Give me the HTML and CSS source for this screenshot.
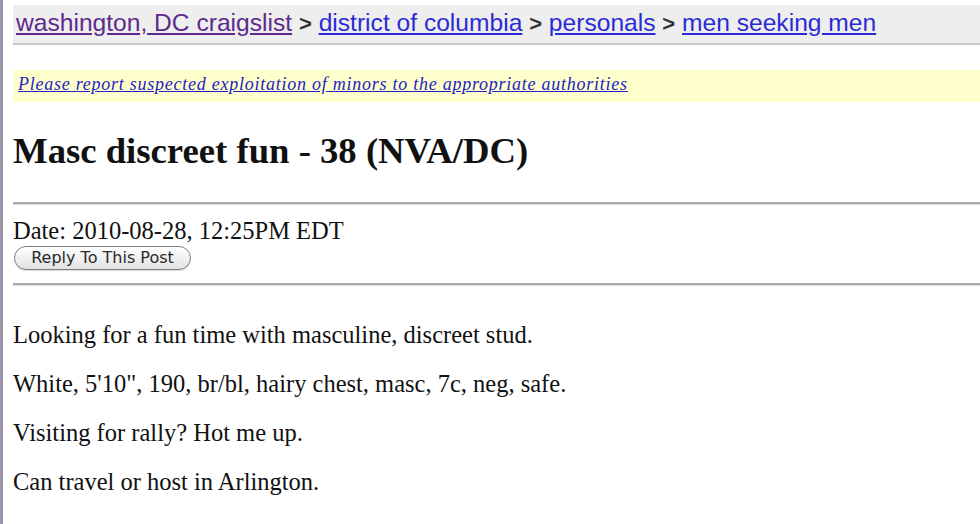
FILE: index.html
```html
<!DOCTYPE html>
<html lang="en">
<head>
    <meta charset="UTF-8">
    <title>Masc discreet fun - 38 (NVA/DC)</title>
    <link rel="stylesheet" href="styles.css">
</head>
<body>
    <div class="page">
        <div class="bchead">
            <a href="#" class="visited">washington, DC craigslist</a>
            <span class="sep">&gt;</span>
            <a href="#">district of columbia</a>
            <span class="sep">&gt;</span>
            <a href="#">personals</a>
            <span class="sep">&gt;</span>
            <a href="#">men seeking men</a>
        </div>

        <div class="notice">
            <a href="#">Please report suspected exploitation of minors to the appropriate authorities</a>
        </div>

        <h2 class="post-title">Masc discreet fun - 38 (NVA/DC)</h2>

        <hr>
        <div class="post-date">Date: 2010-08-28, 12:25PM EDT</div>
        <button class="reply-btn">Reply To This Post</button>
        <hr>

        <div class="userbody">
            <p>Looking for a fun time with masculine, discreet stud.</p>
            <p>White, 5'10", 190, br/bl, hairy chest, masc, 7c, neg, safe.</p>
            <p>Visiting for rally? Hot me up.</p>
            <p>Can travel or host in Arlington.</p>
        </div>
    </div>
</body>
</html>
```

FILE: styles.css
```css
* {
    box-sizing: border-box;
}

body {
    margin: 0;
    background: #ffffff;
    font-family: 'Liberation Serif', 'Times New Roman', serif;
    color: #111111;
    overflow: hidden;
}

.page {
    min-height: 524px;
    border-left: 3px solid #9c95a9;
    padding: 5px 0 0 10px;
}

.bchead {
    background: #eeeeee;
    height: 40px;
    padding: 4px 0 0 3px;
    font-family: 'Liberation Sans', Arial, sans-serif;
    font-size: 24.6px;
    line-height: 28px;
    border-bottom: 2px solid #c8c8c8;
    white-space: nowrap;
}

.bchead a {
    color: #2b2bd6;
}

.bchead a.visited {
    color: #5e2a8c;
}

.sep {
    color: #333333;
    font-weight: bold;
    font-size: 22px;
}

.notice {
    margin-top: 25px;
    background: #ffffcc;
    height: 32px;
    padding: 4px 0 0 5px;
    font-size: 18px;
    letter-spacing: 0.75px;
    font-style: italic;
}

.notice a {
    color: #2323c8;
}

.post-title {
    margin: 28px 0 0;
    font-size: 36.7px;
    line-height: 42px;
    font-weight: bold;
    color: #111111;
}

hr {
    margin: 0;
    border: none;
    border-top: 2px solid #a9a9a9;
    border-bottom: 1px solid #dddddd;
}

.post-title + hr {
    margin-top: 30px;
}

.post-date {
    margin-top: 12px;
    font-size: 24.5px;
    line-height: 28px;
}

.reply-btn {
    display: block;
    margin: 1px 0 13px 1px;
    width: 177px;
    height: 24px;
    padding: 0;
    font-family: 'DejaVu Sans', Verdana, sans-serif;
    font-size: 16px;
    line-height: 20px;
    color: #2a2a2a;
    background: linear-gradient(#ffffff, #e2e2e2);
    border: 1px solid #7e7e7e;
    border-radius: 12px;
    box-shadow: 0 1px 1px rgba(0, 0, 0, 0.15);
}

.userbody {
    padding-top: 35px;
}

.userbody p {
    margin: 0 0 21px;
    font-size: 24.5px;
    line-height: 28px;
}
```
